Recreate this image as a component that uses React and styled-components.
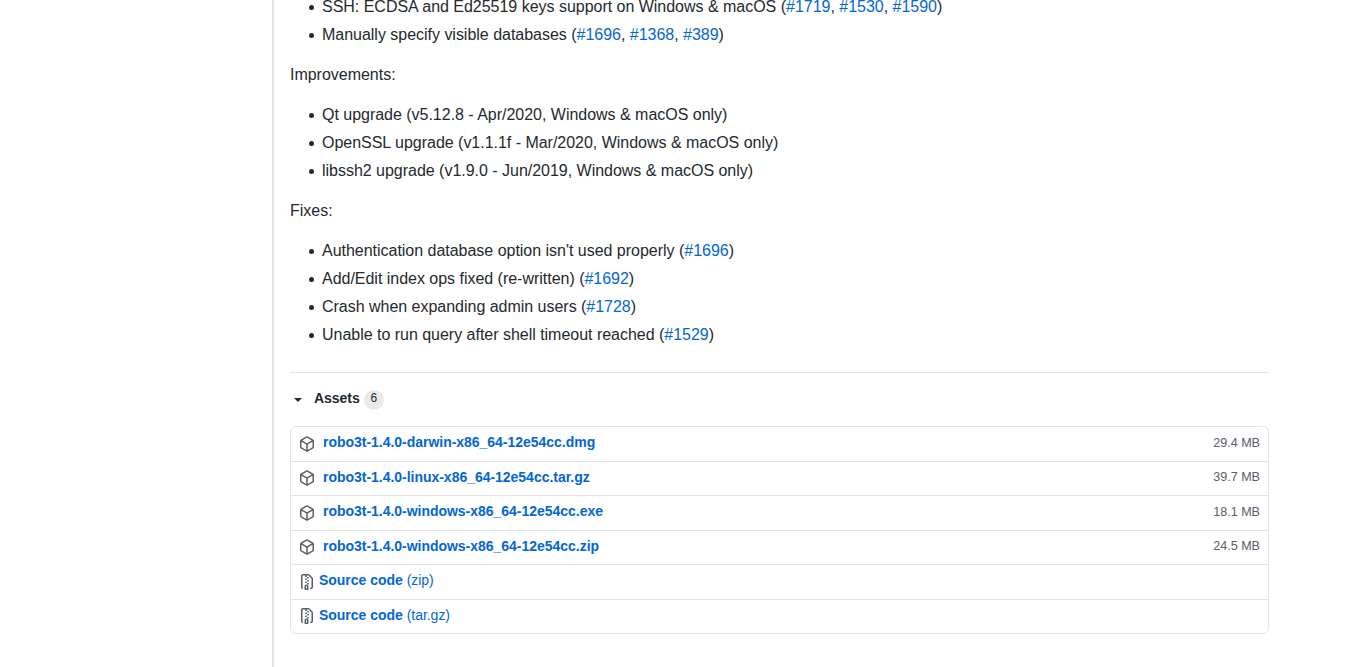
import React from "react";
import styled, { createGlobalStyle } from "styled-components";

const GlobalStyle = createGlobalStyle`
  * { box-sizing: border-box; }
  body {
    margin: 0;
    background: #fff;
    color: #24292e;
    font-family: "Liberation Sans", Arial, sans-serif;
    font-size: 14px;
    line-height: 1.5;
    letter-spacing: -0.025px;
  }
`;

const Page = styled.main`
  height: 667px;
  overflow: hidden;
  padding-left: 272px;
`;

const Release = styled.section`
  display: flow-root;
  height: 100%;
  width: 997px;
  border-left: 2px solid #e1e4e8;
  padding-left: 16px;
`;

const Notes = styled.div`
  margin-top: -5px;
  font-size: 16px;
  line-height: 24px;
  letter-spacing: -0.02px;
`;

const Paragraph = styled.p`
  margin: 0 0 16px;
`;

const List = styled.ul`
  margin: 0 0 16px;
  padding-left: 19px;
  list-style: none;
`;

const Item = styled.li`
  display: flex;
  & + & { margin-top: 4px; }
  &::before {
    content: "";
    flex: none;
    width: 5px;
    height: 5px;
    margin: 10px 8px 0 0;
    border-radius: 50%;
    background: #24292e;
  }
`;

const Link = styled.a`
  color: #0366d6;
  text-decoration: none;
`;

const Assets = styled.div`
  margin-top: 25px;
  border-top: 1px solid #e1e4e8;
`;

const Summary = styled.div`
  display: flex;
  align-items: center;
  height: 53px;
  padding: 0 0 3px 4px;
`;

const Caret = styled.span`
  border: 4px solid transparent;
  border-top-color: #24292e;
  border-bottom-width: 0;
  margin-top: 4px;
`;

const Title = styled.span`
  margin-left: 12px;
  font-weight: 700;
`;

const Counter = styled.span`
  height: 20px;
  min-width: 20px;
  margin: 4px 0 0 4px;
  border-radius: 10px;
  background: #e9eaec;
  font-size: 12px;
  line-height: 17px;
  text-align: center;
`;

const Box = styled.div`
  border: 1px solid #e1e4e8;
  border-radius: 6px;
`;

const Row = styled.div`
  display: flex;
  align-items: center;
  height: ${(p) => (p.$tall ? 35 : 34)}px;
  padding: 0 8px;
  & + & { border-top: 1px solid #e1e4e8; }
`;

const Icon = styled.svg`
  flex: none;
  width: 16px;
  height: 16px;
  margin-bottom: 1px;
  fill: #586069;
`;

const Name = styled(Link)`
  flex: 1;
  margin-left: ${(p) => (p.$source ? 4 : 8)}px;
  padding-bottom: 3px;
`;

const Size = styled.small`
  font-size: 12.6px;
  padding-bottom: 2px;
  color: #586069;
`;

const packagePath =
  "M8.878.392a1.75 1.75 0 00-1.756 0l-5.25 3.045A1.75 1.75 0 001 4.951v6.098c0 .624.332 1.2.872 1.514l5.25 3.045a1.75 1.75 0 001.756 0l5.25-3.045c.54-.313.872-.89.872-1.514V4.951c0-.624-.332-1.2-.872-1.514L8.878.392zM7.875 1.69a.25.25 0 01.25 0l4.63 2.685L8 7.133 3.245 4.375l4.63-2.685zM2.5 5.677v5.372c0 .09.047.171.125.216l4.625 2.683V8.432L2.5 5.677zm6.25 8.271l4.625-2.683a.25.25 0 00.125-.216V5.677L8.75 8.432v5.516z";
const zipPath =
  "M3.5 1.75a.25.25 0 01.25-.25h3a.75.75 0 000 1.5h.5a.75.75 0 000-1.5h2.086a.25.25 0 01.177.073l2.914 2.914a.25.25 0 01.073.177v8.586a.25.25 0 01-.25.25h-.5a.75.75 0 000 1.5h.5A1.75 1.75 0 0014 13.25V4.664c0-.464-.184-.909-.513-1.237L10.573.513A1.75 1.75 0 009.336 0H3.75A1.75 1.75 0 002 1.75v11.5c0 .649.353 1.214.874 1.515a.75.75 0 10.752-1.298.25.25 0 01-.126-.217V1.75zM8.75 3a.75.75 0 000 1.5h.5a.75.75 0 000-1.5h-.5zM6 5.25a.75.75 0 01.75-.75h.5a.75.75 0 010 1.5h-.5A.75.75 0 016 5.25zm2 1.5A.75.75 0 018.75 6h.5a.75.75 0 010 1.5h-.5A.75.75 0 018 6.75zm-1.25.75a.75.75 0 000 1.5h.5a.75.75 0 000-1.5h-.5zM8 9.75A.75.75 0 018.75 9h.5a.75.75 0 010 1.5h-.5A.75.75 0 018 9.75zm-.75.75a1.75 1.75 0 00-1.75 1.75v3c0 .414.336.75.75.75h2.5a.75.75 0 00.75-.75v-3a1.75 1.75 0 00-1.75-1.75h-.5zM7 12.25a.25.25 0 01.25-.25h.5a.25.25 0 01.25.25v2.25H7v-2.25z";

const features = [
  ["SSH: ECDSA and Ed25519 keys support on Windows & macOS", ["#1719", "#1530", "#1590"]],
  ["Manually specify visible databases", ["#1696", "#1368", "#389"]],
];
const improvements = [
  ["Qt upgrade (v5.12.8 - Apr/2020, Windows & macOS only)"],
  ["OpenSSL upgrade (v1.1.1f - Mar/2020, Windows & macOS only)"],
  ["libssh2 upgrade (v1.9.0 - Jun/2019, Windows & macOS only)"],
];
const fixes = [
  ["Authentication database option isn't used properly", ["#1696"]],
  ["Add/Edit index ops fixed (re-written)", ["#1692"]],
  ["Crash when expanding admin users", ["#1728"]],
  ["Unable to run query after shell timeout reached", ["#1529"]],
];
const files = [
  { name: "robo3t-1.4.0-darwin-x86_64-12e54cc.dmg", size: "29.4 MB" },
  { name: "robo3t-1.4.0-linux-x86_64-12e54cc.tar.gz", size: "39.7 MB" },
  { name: "robo3t-1.4.0-windows-x86_64-12e54cc.exe", size: "18.1 MB", tall: true },
  { name: "robo3t-1.4.0-windows-x86_64-12e54cc.zip", size: "24.5 MB" },
  { name: "Source code", format: "(zip)", tall: true },
  { name: "Source code", format: "(tar.gz)" },
];

function Changes({ items }) {
  return (
    <List>
      {items.map(([text, issues]) => (
        <Item key={text}>
          <span>
            {text}
            {issues && (
              <>
                {" ("}
                {issues.map((issue, i) => (
                  <React.Fragment key={issue}>
                    {i > 0 && ", "}
                    <Link>{issue}</Link>
                  </React.Fragment>
                ))}
                {")"}
              </>
            )}
          </span>
        </Item>
      ))}
    </List>
  );
}

export default function App() {
  return (
    <Page>
      <GlobalStyle />
      <Release>
        <Notes>
          <Changes items={features} />
          <Paragraph>Improvements:</Paragraph>
          <Changes items={improvements} />
          <Paragraph>Fixes:</Paragraph>
          <Changes items={fixes} />
        </Notes>
        <Assets>
          <Summary>
            <Caret />
            <Title>Assets</Title>
            <Counter>6</Counter>
          </Summary>
          <Box>
            {files.map((file) => (
              <Row key={file.name + file.format} $tall={file.tall}>
                <Icon viewBox="0 0 16 16">
                  <path fillRule="evenodd" d={file.format ? zipPath : packagePath} />
                </Icon>
                <Name $source={!!file.format}>
                  <b>{file.name}</b>
                  {file.format && ` ${file.format}`}
                </Name>
                {file.size && <Size>{file.size}</Size>}
              </Row>
            ))}
          </Box>
        </Assets>
      </Release>
    </Page>
  );
}
